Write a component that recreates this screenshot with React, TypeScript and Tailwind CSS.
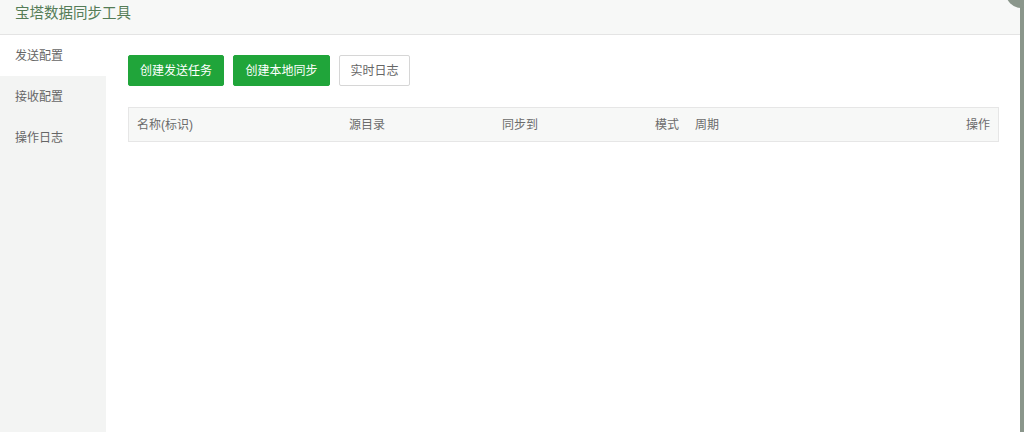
const menus = ['发送配置', '接收配置', '操作日志']

const buttons = [
    { label: '创建发送任务', cls: 'w-[96px] bg-[#20a53a] border-[#20a53a] text-white' },
    { label: '创建本地同步', cls: 'w-[97px] bg-[#20a53a] border-[#20a53a] text-white' },
    { label: '实时日志', cls: 'w-[71px] bg-white border-[#d6d6d6] text-[#666]' },
]

export default function App() {
    return <div className="relative w-[1024px] h-[432px] overflow-hidden bg-white flex flex-col font-['Liberation_Sans','Noto_Sans_CJK_SC',sans-serif]">
        <header className="h-[35px] shrink-0 bg-[#f7f8f7] border-b border-[#e4e4e4] px-[15px]">
            <h1 className="text-[14.5px] leading-[26px] text-[#547c56]">宝塔数据同步工具</h1>
        </header>
        <div className="flex flex-1 min-h-0">
            <aside className="w-[106px] shrink-0 bg-[#f3f4f3]">
                {menus.map((m, i) => (
                    <div key={m} className={`h-[41px] px-[15px] flex items-center text-[12px] text-[#666] ${i === 0 ? 'bg-white' : ''}`}>
                        {m}
                    </div>
                ))}
            </aside>
            <main className="flex-1 pl-[22px] pr-[25px] pt-[20px]">
                <div className="flex gap-[9px]">
                    {buttons.map(b => (
                        <button key={b.label} className={`h-[31px] rounded-[2px] border text-[12px] flex items-center justify-center ${b.cls}`}>
                            {b.label}
                        </button>
                    ))}
                </div>
                <div className="mt-[21px] h-[35px] w-[871px] border border-[#e6e6e6] bg-[#f7f8f7] grid grid-cols-[211px_153px_147px_46px_1fr_120px] items-center text-[12px] text-[#6b6b6b]">
                    <div className="pl-[8px]">名称(标识)</div>
                    <div className="pl-[9px]">源目录</div>
                    <div className="pl-[9px]">同步到</div>
                    <div className="pr-[7px] text-right">模式</div>
                    <div className="pl-[9px]">周期</div>
                    <div className="pr-[8px] text-right">操作</div>
                </div>
            </main>
        </div>
        <div className="absolute right-0 top-[6px] bottom-0 w-[4px] bg-[#8a968b]"></div>
        <div className="absolute right-[-12px] top-[-22px] w-[30px] h-[30px] rounded-full bg-[#8a968b]"></div>
    </div>
}
